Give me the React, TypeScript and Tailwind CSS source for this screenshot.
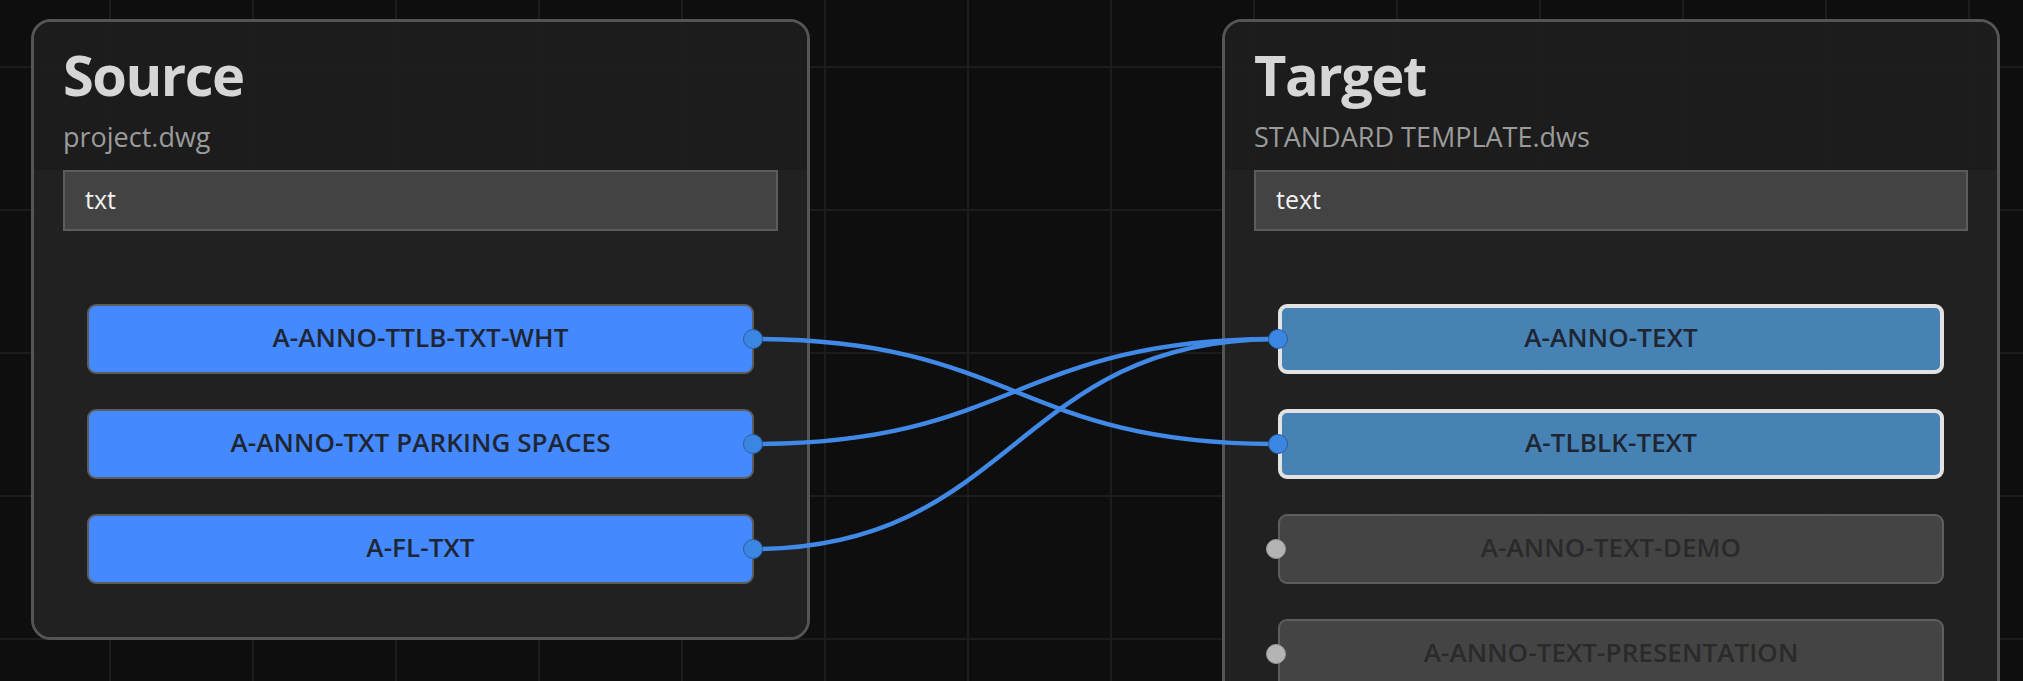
import React from "react";

type Item = { label: string; active: boolean; selected?: boolean };

const sourceItems: Item[] = [
  { label: "A-ANNO-TTLB-TXT-WHT", active: true },
  { label: "A-ANNO-TXT PARKING SPACES", active: true },
  { label: "A-FL-TXT", active: true },
];

const targetItems: Item[] = [
  { label: "A-ANNO-TEXT", active: true, selected: true },
  { label: "A-TLBLK-TEXT", active: true, selected: true },
  { label: "A-ANNO-TEXT-DEMO", active: false },
  { label: "A-ANNO-TEXT-PRESENTATION", active: false },
];

// source handle x / target handle x, row centers
const SX = 753;
const TX = 1277;
const rowY = [339, 444, 549];

const links: [number, number][] = [
  [0, 1],
  [1, 0],
  [2, 0],
];

const edgePath = (a: number, b: number) => {
  const y1 = rowY[a];
  const y2 = rowY[b];
  const mid = SX + (TX - SX) / 2;
  return `M ${SX},${y1} C ${mid},${y1} ${mid},${y2} ${TX},${y2}`;
};

const Row = ({ item, side }: { item: Item; side: "source" | "target" }) => {
  let box = "bg-[#4589ff] border-2 border-[#5c5c5c] text-[#1f2633]";
  if (item.selected) box = "bg-[#4682b4] border-4 border-[#e2e2e2] text-[#1f2633]";
  if (!item.active) box = "bg-[#444444] border-2 border-[#5e5e5e] text-[#2a2a2a]";

  return (
    <div
      className={`relative mx-6 flex h-[70px] items-center justify-center rounded-[9px] pb-[4px] text-[26px] font-semibold tracking-[0.1px] ${box}`}
    >
      {item.label}
      {side === "source" ? (
        <span className="absolute right-[-11px] top-1/2 z-20 h-[20px] w-[20px] -translate-y-1/2 rounded-full border border-[#2b5f9f] bg-[#3b86e3]" />
      ) : (
        <span
          className={`absolute left-[-14px] top-1/2 z-20 h-[20px] w-[20px] -translate-y-1/2 rounded-full border ${
            item.active ? "border-[#2b5f9f] bg-[#3b86e3]" : "border-[#9a9a9a] bg-[#b4b4b4]"
          }`}
        />
      )}
    </div>
  );
};

const Panel = ({
  title,
  file,
  query,
  items,
  side,
  width,
}: {
  title: string;
  file: string;
  query: string;
  items: Item[];
  side: "source" | "target";
  width: string;
}) => {
  return (
    <div className={`${width} shrink-0 overflow-hidden rounded-[20px] border-[3px] border-[#555555]`}>
      <div className="h-[148px] bg-[rgba(30,30,30,0.9)] px-[29px] pt-[23px]">
        <h1 className="text-[56px] font-bold leading-[58px] tracking-[-1.5px] text-[#d6d6d6]">{title}</h1>
        <p className="mt-[21px] text-[27px] leading-[26px] text-[#9b9b9b]">{file}</p>
      </div>
      <div className="bg-[rgba(36,36,36,0.9)] px-[29px] pb-[53px]">
        <div className="flex h-[61px] items-center border-2 border-[#5c5c5c] bg-[rgba(70,70,70,0.92)] pb-[2px] pl-5 text-[25px] text-[#f2f2f2]">
          {query}
        </div>
        <div className="mt-[73px] flex flex-col gap-[35px]">
          {items.map((item) => (
            <Row key={item.label} item={item} side={side} />
          ))}
        </div>
      </div>
    </div>
  );
};

const App = () => {
  return (
    <div className="relative flex h-[681px] w-full items-start gap-[412px] overflow-hidden bg-[#0e0e0e] bg-[linear-gradient(to_right,#1c1c1c_2px,transparent_2px),linear-gradient(to_bottom,#1c1c1c_2px,transparent_2px)] bg-[size:143px_143px] bg-[position:-34px_-77px] pl-[31px] pt-[19px] font-['Open_Sans',sans-serif]">
      <Panel title="Source" file="project.dwg" query="txt" items={sourceItems} side="source" width="w-[779px]" />
      <Panel
        title="Target"
        file="STANDARD TEMPLATE.dws"
        query="text"
        items={targetItems}
        side="target"
        width="w-[778px]"
      />
      <svg className="pointer-events-none absolute inset-0 z-10 h-full w-full">
        {links.map(([a, b]) => (
          <path key={`${a}-${b}`} d={edgePath(a, b)} fill="none" stroke="#4189e6" strokeWidth={4.5} />
        ))}
      </svg>
    </div>
  );
};

export default App;
